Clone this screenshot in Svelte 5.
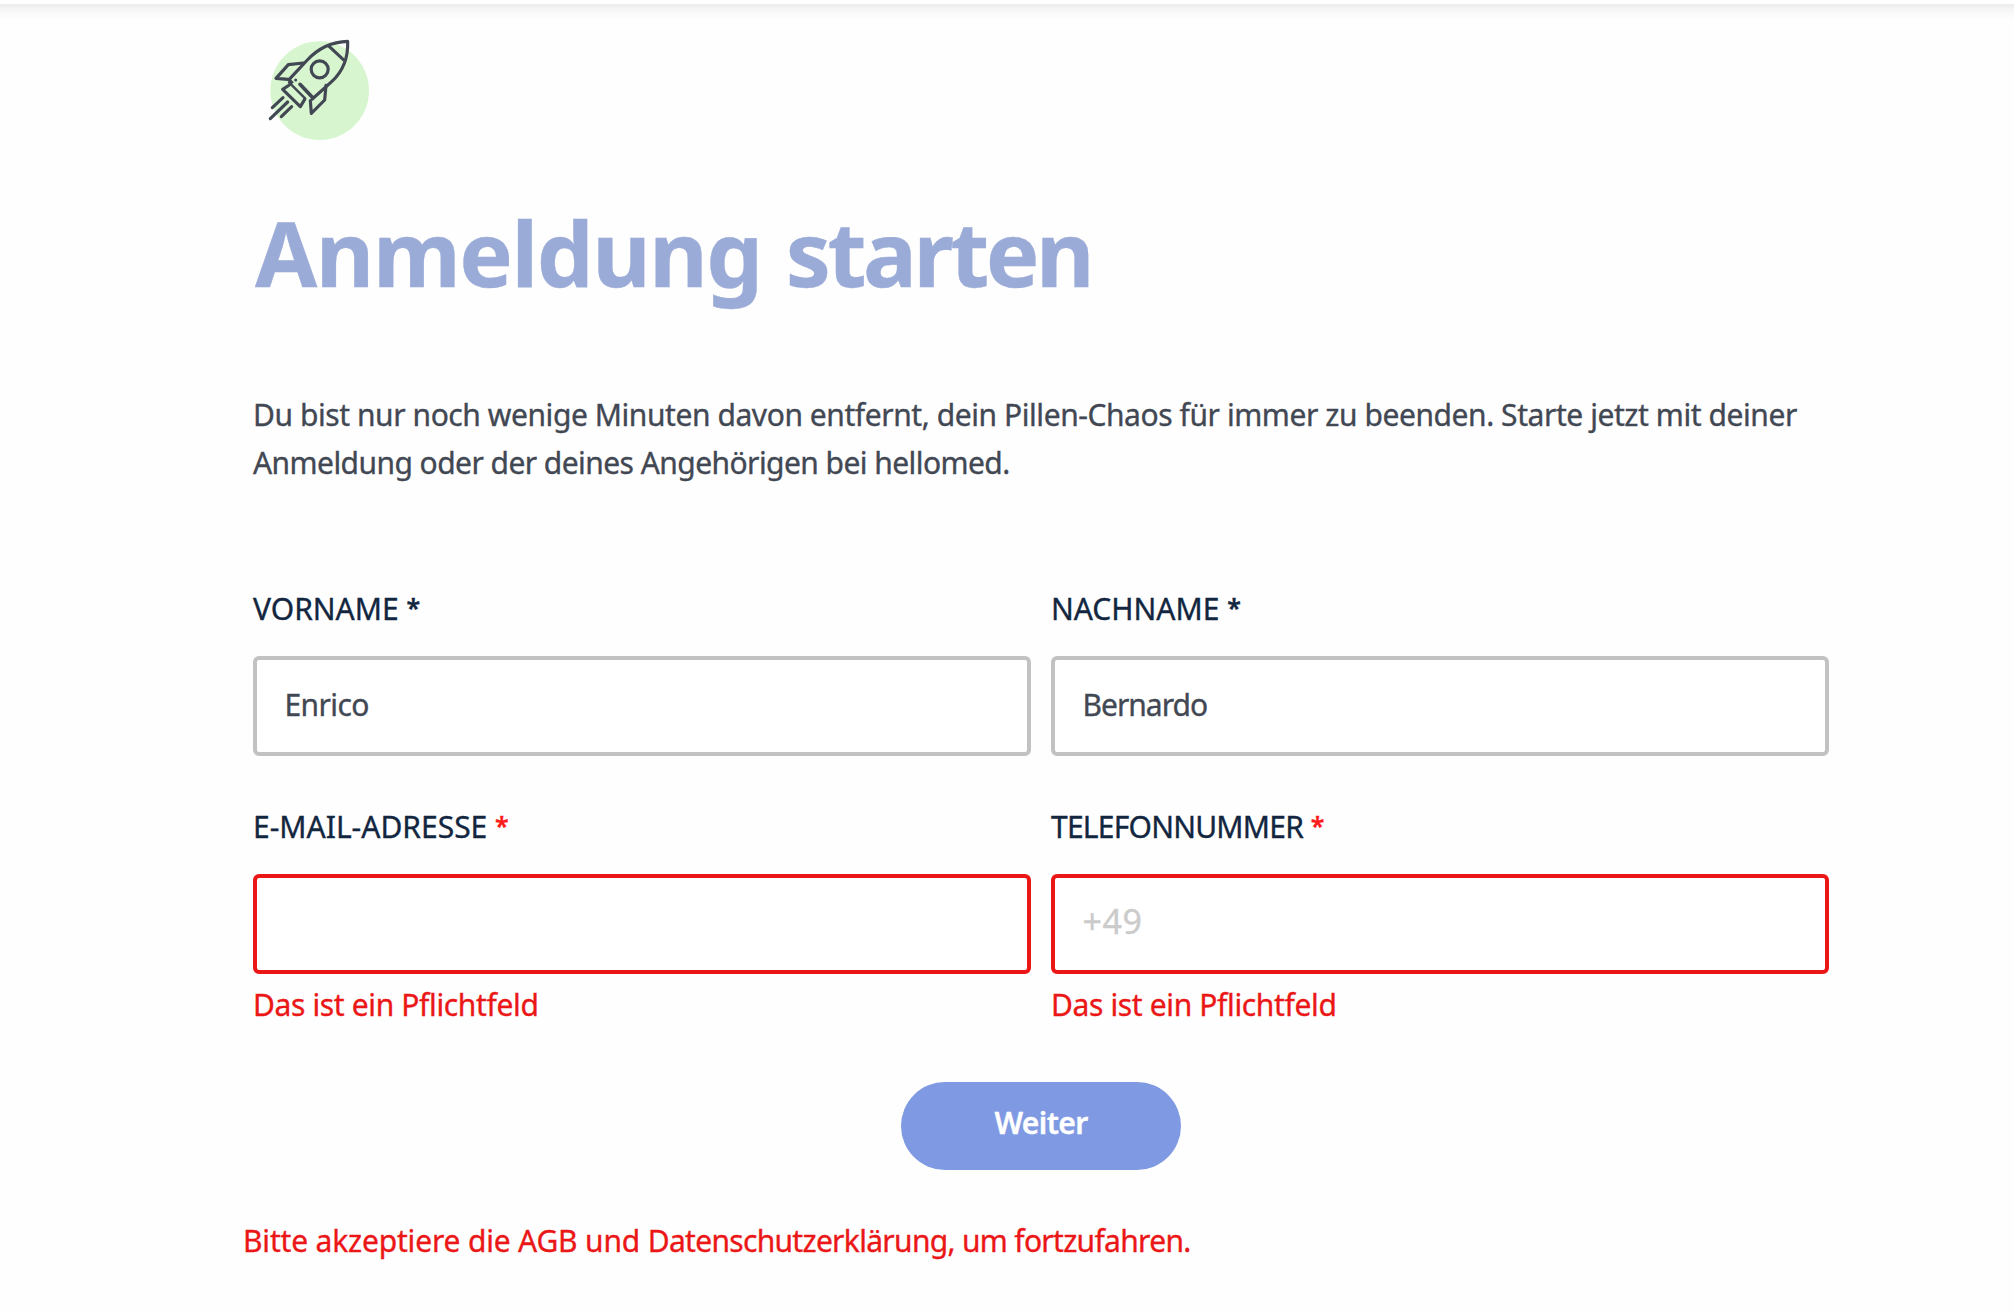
<script>
  let firstName = $state('Enrico');
  let lastName = $state('Bernardo');
  let email = $state('');
  let phone = $state('');
</script>

<div class="topbar"></div>

<main>
  <svg class="rocket" viewBox="0 0 420 390" width="140" height="130" aria-hidden="true">
    <circle cx="209" cy="212" r="148" fill="#d7f5cf" />
    <g fill="none" stroke="#424853" stroke-width="9.500" stroke-linecap="round" stroke-linejoin="round">
      <path d="M117 179 L172 120 Q222 66 293 64 Q296 138 245 185 L187 237" />
      <path d="M117 179 L128 190" stroke-linecap="butt" />
      <path d="M235 77 L280 119" />
      <circle cx="209" cy="148" r="25.500" />
      <path d="M160 129 L115 134 L78 175 L114 178" />
      <path d="M228 196 L224 240 L184 280 L181 242" />
      <path d="M150 193 L187 232" stroke-width="11" />
      <path d="M118 195 L98 208 L151 260 L164 238" />
      <path d="M117 187 L166 236" stroke-width="7" />
      <path d="M99 233 L67 263 M113 246 L61 296 M125 260 L94 290" />
    </g>
    <circle cx="137" cy="180" r="4.500" fill="#424853" />
  </svg>

  <h1>Anmeldung <span class="verb">starten</span></h1>

  <p class="intro">
    Du bist nur noch wenige Minuten davon entfernt, dein Pillen-Chaos für immer zu beenden. Starte jetzt mit deiner<br />
    <span class="second">Anmeldung oder der deines Angehörigen bei hellomed.</span>
  </p>

  <form novalidate>
    <div class="grid">
      <div class="field">
        <label for="first">VORNAME <span class="star">*</span></label>
        <input id="first" class="first" bind:value={firstName} />
      </div>
      <div class="field">
        <label for="last">NACHNAME <span class="star">*</span></label>
        <input id="last" class="last" bind:value={lastName} />
      </div>
      <div class="field invalid">
        <label for="email">E-MAIL-ADRESSE <span class="star">*</span></label>
        <input id="email" bind:value={email} />
        <div class="error">Das ist ein Pflichtfeld</div>
      </div>
      <div class="field invalid">
        <label for="phone"><span class="tight">TELEFONNUMMER</span> <span class="star">*</span></label>
        <input id="phone" class="phone" placeholder="+49" bind:value={phone} />
        <div class="error">Das ist ein Pflichtfeld</div>
      </div>
    </div>
    <button type="button">Weiter</button>
    <div class="notice">Bitte akzeptiere die AGB und <span class="terms">Datenschutzerklärung, um fortzufahren.</span></div>
  </form>
</main>

<style>
  :global(body) {
    background: #fefefe;
    font-family: 'Noto Sans', sans-serif;
  }
  .topbar {
    height: 20px;
    box-sizing: border-box;
    border-top: 4px solid #fff;
    background: linear-gradient(#ebebeb, #f6f6f6 35%, #fefefe) padding-box;
  }
  main {
    width: 1576px;
    margin-left: 253px;
    font-size: 30px;
    line-height: 48px;
    color: #424853;
    -webkit-text-stroke: 0.35px currentColor;
  }
  .rocket {
    display: block;
    margin-left: -3px;
  }
  h1 {
    margin: 42px 0 0 2px;
    font-size: 90px;
    line-height: 120px;
    font-weight: 700;
    letter-spacing: -1.45px;
    word-spacing: 2px;
    color: #9babd7;
    white-space: nowrap;
  }
  .verb {
    letter-spacing: -3.5px;
  }
  .intro {
    margin: 79px 0 0;
    letter-spacing: -0.43px;
    white-space: nowrap;
  }
  .second {
    letter-spacing: -0.56px;
  }
  form {
    margin-top: 98px;
  }
  .grid {
    display: grid;
    grid-template-columns: 778px 778px;
    column-gap: 20px;
    row-gap: 47px;
  }
  .field {
    display: flex;
    flex-direction: column;
  }
  label {
    display: block;
    margin-bottom: 23px;
    color: #12263f;
  }
  .tight {
    letter-spacing: -0.77px;
  }
  .star {
    font-size: 25px;
    line-height: 1;
    font-weight: 600;
    position: relative;
    top: -3px;
  }
  .invalid .star {
    color: #ff1a1a;
  }
  input {
    box-sizing: border-box;
    width: 100%;
    height: 100px;
    margin: 0;
    padding: 0 27.500px 4px;
    border: 4px solid #c2c2c3;
    border-radius: 6px;
    outline: none;
    background: #fff;
    color: #424853;
    font: inherit;
  }
  .first {
    letter-spacing: -0.6px;
  }
  .last {
    letter-spacing: -1px;
  }
  .phone {
    font-size: 34px;
    letter-spacing: 0.5px;
    padding-bottom: 6px;
  }
  .phone::placeholder {
    color: #cbcbcb;
    opacity: 1;
  }
  .invalid input {
    border-color: #eb1717;
  }
  .error {
    margin-top: 7px;
    letter-spacing: -0.36px;
    color: #eb1717;
  }
  button {
    display: block;
    width: 280px;
    height: 88px;
    margin: 53px auto 0;
    padding: 0 0 6px;
    border: 0;
    border-radius: 44px;
    background: #7f9ae3;
    color: #fff;
    font: inherit;
    font-weight: 600;
    letter-spacing: -0.6px;
  }
  .notice {
    margin: 47px 0 0 -10px;
    letter-spacing: -0.18px;
    color: #eb1717;
  }
  .terms {
    letter-spacing: -0.69px;
  }
</style>
